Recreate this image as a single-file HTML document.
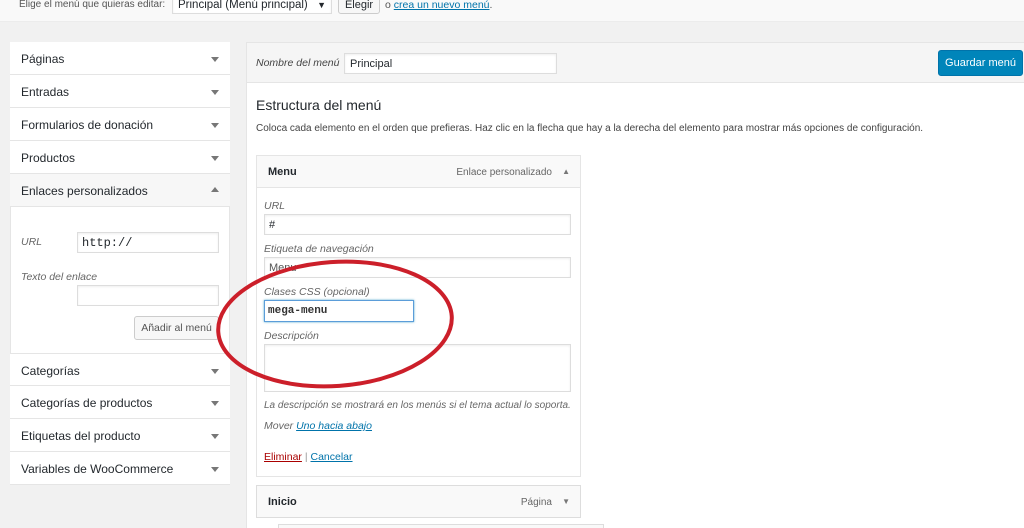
<!DOCTYPE html>
<html><head><meta charset="utf-8"><style>
*{box-sizing:border-box;margin:0;padding:0}
html,body{width:1024px;height:528px;overflow:hidden}
body{background:#f1f1f1;font-family:"Liberation Sans",sans-serif;color:#23282d;position:relative;font-size:12px}
.a{position:absolute}
.row{position:absolute;left:10px;width:220px;height:33px;background:#fff;border-bottom:1px solid #e5e5e5;padding:10px 11px;font-size:12px}
.row:after{content:"";position:absolute;right:11px;top:15px;border:4px solid transparent;border-top:5px solid #777;border-bottom:0}
.up:after{border-top:0;border-bottom:5px solid #777;top:13px}
.inp{position:absolute;background:#fff;border:1px solid #ddd;box-shadow:inset 0 1px 2px rgba(0,0,0,.07)}
.it{font-style:italic;color:#666;font-size:10.5px}
</style></head><body>
<div class="a" style="left:0;top:0;width:1024px;height:22px;background:#f9f9f9;border-bottom:1px solid #ececec"></div>
<div class="a" style="left:19px;top:-1px;font-size:10px;color:#555">Elige el menú que quieras editar:</div>
<div class="inp" style="left:172px;top:-8px;width:160px;height:22px;font-size:11.5px;padding:7px 5px 0;line-height:10px">Principal (Menú principal)<span style="position:absolute;right:5px;top:7px;font-size:9px">▼</span></div>
<div class="a" style="left:338px;top:-8px;width:42px;height:22px;background:#f7f7f7;border:1px solid #ccc;border-radius:3px;font-size:11px;text-align:center;padding-top:7px;line-height:10px">Elegir</div>
<div class="a" style="left:385px;top:-1px;font-size:10.5px;color:#555">o <span style="color:#0073aa;text-decoration:underline">crea un nuevo menú</span>.</div>

<div class="a" style="left:10px;top:42px;width:220px;height:443px;background:#fff;border:1px solid #e5e5e5"></div>
<div class="row" style="top:42px">Páginas</div>
<div class="row" style="top:75px">Entradas</div>
<div class="row" style="top:108px">Formularios de donación</div>
<div class="row" style="top:141px">Productos</div>
<div class="row up" style="top:174px;background:#f7f7f7">Enlaces personalizados</div>
<div class="a it" style="left:21px;top:236px">URL</div>
<div class="inp" style="left:77px;top:232px;width:142px;height:21px;font-family:'Liberation Mono',monospace;font-size:12px;padding:3px 4px">http://</div>
<div class="a it" style="left:21px;top:271px">Texto del enlace</div>
<div class="inp" style="left:77px;top:285px;width:142px;height:21px"></div>
<div class="a" style="left:134px;top:316px;width:85px;height:24px;background:#f7f7f7;border:1px solid #ccc;border-radius:3px;font-size:10.5px;color:#555;text-align:center;padding-top:5px">Añadir al menú</div>
<div class="row" style="top:353px;border-top:1px solid #e5e5e5">Categorías</div>
<div class="row" style="top:386px">Categorías de productos</div>
<div class="row" style="top:419px">Etiquetas del producto</div>
<div class="row" style="top:452px">Variables de WooCommerce</div>

<div class="a" style="left:246px;top:42px;width:790px;height:500px;background:#fff;border:1px solid #e5e5e5"></div>
<div class="a" style="left:246px;top:42px;width:790px;height:41px;background:#f5f5f5;border:1px solid #e5e5e5"></div>
<div class="a it" style="left:256px;top:57px;font-size:10.5px;color:#444">Nombre del menú</div>
<div class="inp" style="left:344px;top:53px;width:213px;height:21px;font-size:11px;padding:4px 5px">Principal</div>
<div class="a" style="left:938px;top:50px;width:85px;height:26px;background:#0085ba;border:1px solid #0073aa;border-radius:3px;color:#fff;font-size:11px;text-align:center;padding-top:6px">Guardar menú</div>
<div class="a" style="left:256px;top:97px;font-size:14px">Estructura del menú</div>
<div class="a" style="left:256px;top:123px;font-size:10px;color:#444">Coloca cada elemento en el orden que prefieras. Haz clic en la flecha que hay a la derecha del elemento para mostrar más opciones de configuración.</div>

<div class="a" style="left:256px;top:155px;width:325px;height:322px;background:#fff;border:1px solid #e5e5e5"></div>
<div class="a" style="left:256px;top:155px;width:325px;height:33px;background:#f9f9f9;border:1px solid #e5e5e5;font-weight:bold;font-size:11px;padding:10px 11px">Menu<span style="position:absolute;right:28px;top:11px;font-weight:normal;font-size:10px;color:#666">Enlace personalizado</span><span style="position:absolute;right:10px;top:11px;font-size:8px;color:#777">▲</span></div>
<div class="a it" style="left:264px;top:200px">URL</div>
<div class="inp" style="left:264px;top:214px;width:307px;height:21px;font-size:11px;padding:4px 4px">#</div>
<div class="a it" style="left:264px;top:243px">Etiqueta de navegación</div>
<div class="inp" style="left:264px;top:257px;width:307px;height:21px;font-size:11px;padding:4px 4px;color:#555">Menu</div>
<div class="a it" style="left:264px;top:286px">Clases CSS (opcional)</div>
<div class="inp" style="left:264px;top:300px;width:150px;height:22px;border-color:#5b9dd9;box-shadow:0 0 2px rgba(30,140,190,.8);font-family:'Liberation Mono',monospace;font-size:11px;padding:4px 3px;font-weight:bold;color:#333">mega-menu</div>
<div class="a it" style="left:264px;top:330px">Descripción</div>
<div class="inp" style="left:264px;top:344px;width:307px;height:48px"></div>
<div class="a it" style="left:264px;top:400px;font-size:10px">La descripción se mostrará en los menús si el tema actual lo soporta.</div>
<div class="a it" style="left:264px;top:420px">Mover <span style="color:#0073aa;text-decoration:underline">Uno hacia abajo</span></div>
<div class="a" style="left:264px;top:451px;font-size:10.5px;color:#999"><span style="color:#a00;text-decoration:underline">Eliminar</span> | <span style="color:#0073aa;text-decoration:underline">Cancelar</span></div>

<div class="a" style="left:256px;top:485px;width:325px;height:33px;background:#f9f9f9;border:1px solid #ddd;font-weight:bold;font-size:11px;padding:10px 11px">Inicio<span style="position:absolute;right:28px;top:11px;font-weight:normal;font-size:10px;color:#666">Página</span><span style="position:absolute;right:10px;top:11px;font-size:8px;color:#777">▼</span></div>
<div class="a" style="left:278px;top:524px;width:326px;height:10px;background:#f9f9f9;border:1px solid #ddd"></div>

<svg class="a" style="left:0;top:0" width="1024" height="528"><ellipse cx="335" cy="324" rx="117" ry="62" transform="rotate(-4 335 324)" fill="none" stroke="#cc1f2a" stroke-width="4"/></svg>
</body></html>
